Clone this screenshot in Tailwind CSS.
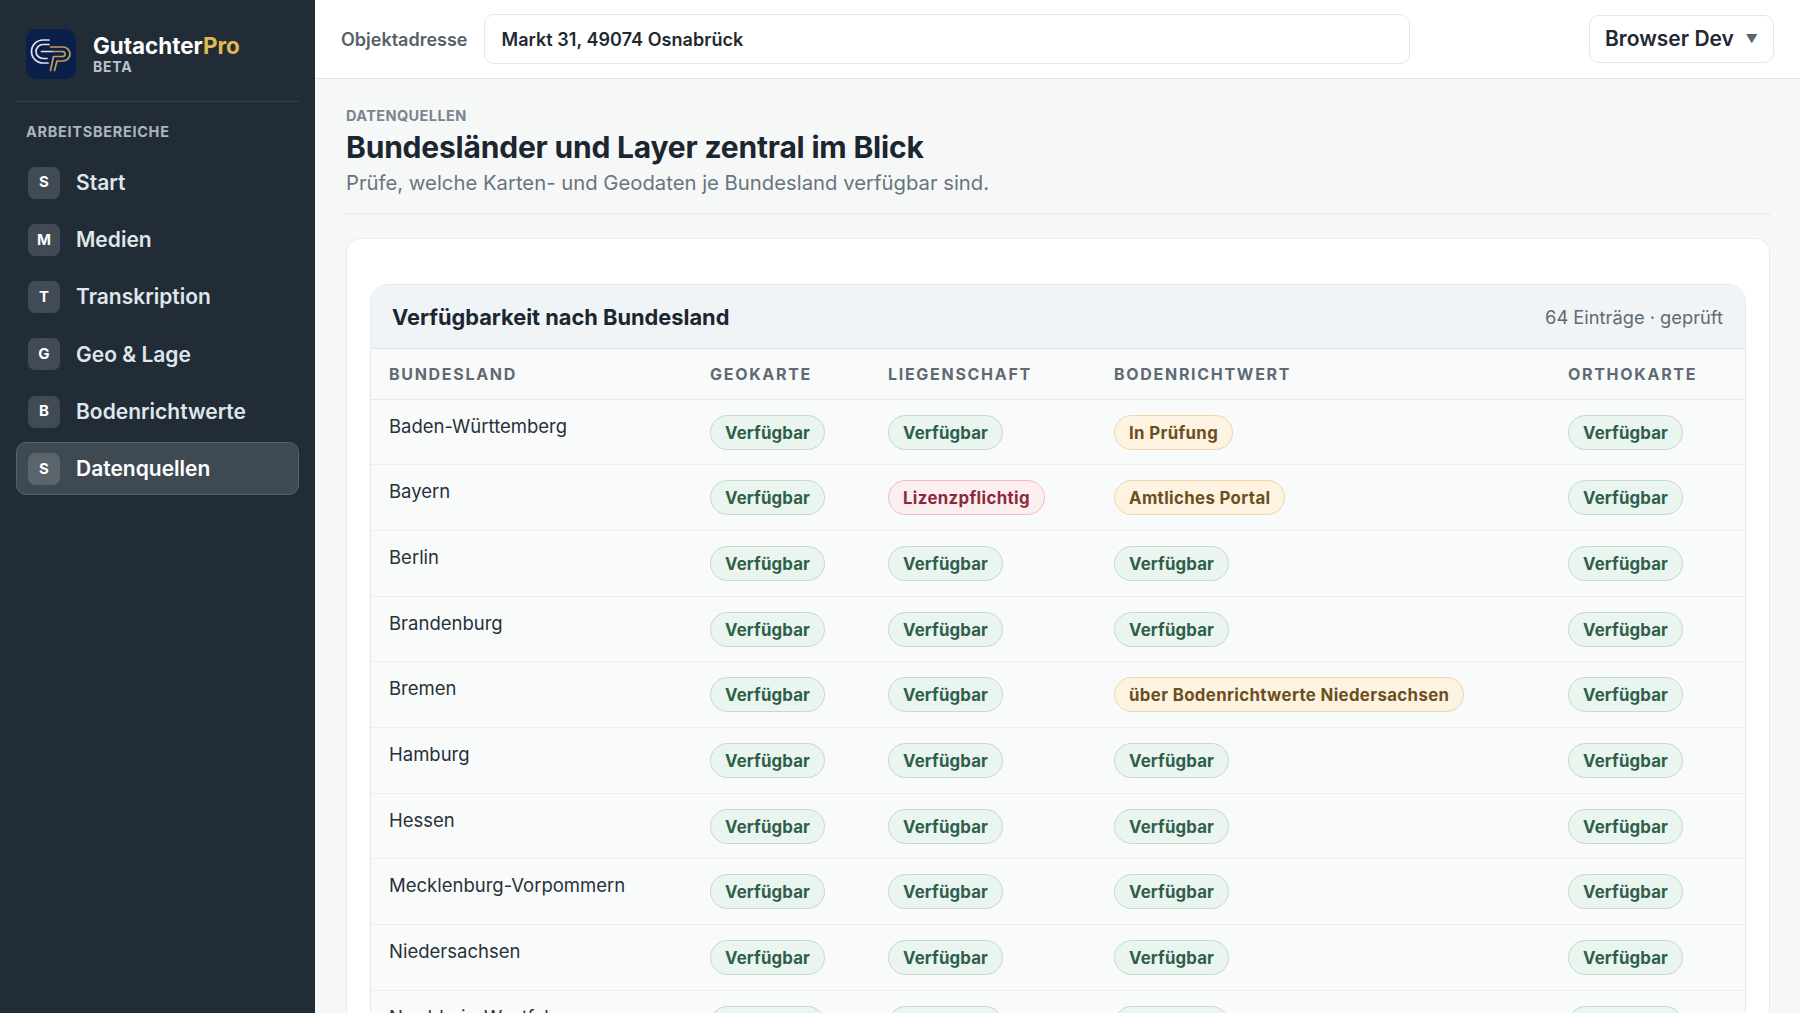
<!DOCTYPE html>
<html lang="de">
<head>
  <meta charset="UTF-8">
  <meta name="viewport" content="width=device-width, initial-scale=1.0">
  <title>GutachterPro - Datenquellen</title>
  <script src="https://cdn.jsdelivr.net/npm/@tailwindcss/browser@4"></script>
</head>
<body class="h-screen overflow-hidden bg-[#f6f8f8] font-['Inter',sans-serif] text-[#1f2933]">
<div class="flex h-full">

  <!-- Sidebar -->
  <aside class="w-[315px] shrink-0 bg-[#212c36] px-4 pt-[29px]">
    <div class="flex items-center gap-[17px] pl-[10px] h-[50px]">
      <svg class="w-[50px] h-[50px] shrink-0" viewBox="0 0 50 50" fill="none">
        <rect width="50" height="50" rx="10" fill="#0b1f4b"/>
        <g stroke="#dfe4ea" stroke-width="1.700" stroke-linecap="round" stroke-linejoin="round">
          <path d="M23 11H17a11.500 11.500 0 0 0 0 23H22"/>
          <path d="M23 15.500H17a7 7 0 0 0 0 14H21"/>
          <path d="M15.500 22.500H27"/>
        </g>
        <g stroke="#c49a57" stroke-width="1.700" stroke-linecap="round" stroke-linejoin="round">
          <path d="M24.500 18H37a7 7 0 0 1 0 14H31L28.500 41.500"/>
          <path d="M26 22.500H36.500a2.500 2.500 0 0 1 0 5H27.500L24.500 41.500"/>
        </g>
      </svg>
      <div>
        <div class="text-[22.400px] leading-[26px] font-bold text-white">Gutachter<span class="text-[#e0b84f]">Pro</span></div>
        <div class="text-[14px] leading-[16px] font-bold tracking-[0.8px] text-[#b9c3cd]">BETA</div>
      </div>
    </div>
    <div class="mt-[22px] h-px bg-[#35414c]"></div>
    <div class="mt-[21px] pl-[10px] text-[14.500px] leading-[18px] font-bold tracking-[0.7px] text-[#aab5bf]">ARBEITSBEREICHE</div>
    <nav class="mt-[15px] flex flex-col gap-[4.300px]" id="nav"></nav>
  </aside>

  <div class="flex-1 min-w-0 flex flex-col">
    <!-- Topbar -->
    <header class="h-[79px] shrink-0 bg-white border-b border-[#e3e7e9] flex items-center pl-[26px] pr-[26px]">
      <span class="text-[18px] font-semibold text-[#56616b]">Objektadresse</span>
      <div class="ml-[16px] w-[926px] h-[50px] flex items-center rounded-[10px] border border-[#e4e7ea] bg-white pl-[17px] pt-[1px] text-[18px] font-semibold tracking-[0.05px] text-[#1f2933]">Markt 31, 49074 Osnabrück</div>
      <div class="ml-auto w-[185px] h-[48px] flex items-center justify-between rounded-[10px] border border-[#e4e7ea] bg-white pl-[15px] pr-[15px] text-[21px] font-semibold text-[#1f2933]">
        <span>Browser Dev</span>
        <span class="text-[12px] text-[#5a6570]">▼</span>
      </div>
    </header>

    <!-- Content -->
    <main class="flex-1 min-h-0 pl-[31px] pr-[29px] pt-[28px]">
      <div class="text-[14.500px] leading-[18px] font-bold tracking-[0.4px] text-[#7b858e]">DATENQUELLEN</div>
      <h1 class="text-[30px] leading-[40px] font-bold tracking-[-0.2px] text-[#1c2630] mt-[2px]">Bundesländer und Layer zentral im Blick</h1>
      <p class="text-[20.300px] leading-[30px] text-[#6a747e] mt-[1px]">Prüfe, welche Karten- und Geodaten je Bundesland verfügbar sind.</p>
      <div class="mt-[15px] h-[2px] bg-[#eceff0]"></div>

      <section class="mt-[23px] w-[1424px] rounded-[14px] border border-[#e8ebed] bg-white px-[23px] pt-[45px]">
        <div class="rounded-[18px] border border-[#e5e9ec] bg-[#f9fbfb]">
          <div class="h-[64px] flex items-center justify-between rounded-t-[18px] bg-[#f1f4f6] border-b border-[#dfe4e7] pl-[21px] pr-[22px]">
            <h2 class="text-[21.800px] font-bold pt-[1px] text-[#1c2630]">Verfügbarkeit nach Bundesland</h2>
            <span class="text-[18.300px] pt-[2px] text-[#5f6a74]">64 Einträge · geprüft</span>
          </div>
          <table class="table-fixed w-full border-collapse">
            <thead>
              <tr class="h-[50px] border-b border-[#e6eaec] text-left text-[16px] font-bold tracking-[1.700px] text-[#5f6a74]">
                <th class="w-[321px] pl-[18px] font-bold">BUNDESLAND</th>
                <th class="w-[178px] pl-[18px] font-bold">GEOKARTE</th>
                <th class="w-[226px] pl-[18px] font-bold">LIEGENSCHAFT</th>
                <th class="w-[454px] pl-[18px] font-bold">BODENRICHTWERT</th>
                <th class="pl-[18px] font-bold">ORTHOKARTE</th>
              </tr>
            </thead>
            <tbody id="rows"></tbody>
          </table>
        </div>
      </section>
    </main>
  </div>
</div>

<script>
const navItems=[["S","Start"],["M","Medien"],["T","Transkription"],["G","Geo & Lage"],["B","Bodenrichtwerte"],["S","Datenquellen"]];
document.getElementById("nav").innerHTML=navItems.map(([l,name],i)=>{
  const active=i===5;
  const box=active?"h-[53px] flex items-center gap-[16px] rounded-[10px] border border-[#56616b] bg-[#3e4952] pl-[11px] text-white":"h-[53px] flex items-center gap-[16px] rounded-[10px] border border-transparent pl-[11px] text-[#dfe6ec]";
  const tile=active?"w-[32px] h-[32px] flex items-center justify-center rounded-[7px] bg-[#5a646d] text-[15px] font-bold text-white":"w-[32px] h-[32px] flex items-center justify-center rounded-[7px] bg-[#414b55] text-[15px] font-bold text-white";
  return `<a class="${box}"><span class="${tile}">${l}</span><span class="text-[21px] font-semibold">${name.replace("&","&amp;")}</span></a>`;
}).join("");

const ok="inline-block h-[35px] leading-[34px] rounded-full border border-[#c5d9d0] bg-[#eaf5f0] px-[14px] text-[16.800px] font-bold tracking-[0.15px] text-[#2f5f4b] whitespace-nowrap";
const warn="inline-block h-[35px] leading-[34px] rounded-full border border-[#ecd7ac] bg-[#fdf3e0] px-[14px] text-[16.800px] font-bold tracking-[0.37px] text-[#6b4f22] whitespace-nowrap";
const bad="inline-block h-[35px] leading-[34px] rounded-full border border-[#ecbcc6] bg-[#fdeef0] px-[14px] text-[16.800px] font-bold tracking-[0.37px] text-[#8c2a3c] whitespace-nowrap";
const V=[ok,"Verfügbar"];
const rows=[
  ["Baden-Württemberg",V,V,[warn,"In Prüfung"],V],
  ["Bayern",V,[bad,"Lizenzpflichtig"],[warn,"Amtliches Portal"],V],
  ["Berlin",V,V,V,V],
  ["Brandenburg",V,V,V,V],
  ["Bremen",V,V,[warn,"über Bodenrichtwerte Niedersachsen"],V],
  ["Hamburg",V,V,V,V],
  ["Hessen",V,V,V,V],
  ["Mecklenburg-Vorpommern",V,V,V,V],
  ["Niedersachsen",V,V,V,V],
  ["Nordrhein-Westfalen",V,V,V,V],
];
document.getElementById("rows").innerHTML=rows.map(r=>{
  const cells=r.slice(1).map(([c,t])=>`<td class="pl-[18px] pt-[15px] align-top"><span class="${c}">${t}</span></td>`).join("");
  return `<tr class="h-[65.700px] border-b border-[#eceff1]"><td class="pl-[18px] pt-[12px] align-top text-[18.500px] leading-[28px] text-[#27313a]">${r[0]}</td>${cells}</tr>`;
}).join("");
</script>
</body>
</html>
